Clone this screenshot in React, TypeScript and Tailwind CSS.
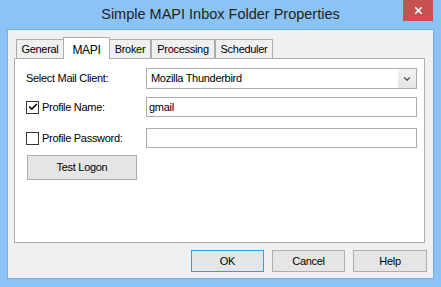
import { Check, ChevronDown, X } from "lucide-react";

const font = { fontFamily: '"Liberation Sans", Arial, sans-serif' };

function Tab({ label, active, w }: { label: string; active?: boolean; w: string }) {
  if (active) {
    return (
      <div className={`${w} relative z-10 -mx-[1px] -mb-px flex h-[22px] items-start justify-center border border-b-0 border-[#adadad] bg-white pt-[3px] text-[12px]`}>
        {label}
      </div>
    );
  }
  return (
    <div className={`${w} flex h-[19px] items-center justify-center border border-b-0 border-[#adadad] bg-[#f0f0f0] text-[11px]`}>
      {label}
    </div>
  );
}

function Checkbox({ checked }: { checked?: boolean }) {
  return (
    <div className="flex h-[13px] w-[13px] items-center justify-center border border-[#333] bg-white">
      {checked && <Check className="h-[10px] w-[10px] text-black" strokeWidth={4} />}
    </div>
  );
}

export default function App() {
  return (
    <div className="flex h-[287px] w-[441px] flex-col bg-[#8cc3f5] px-[7px] pb-[8px] text-black tracking-[-0.3px]" style={font}>
      {/* Title bar */}
      <div className="relative flex h-[29px] shrink-0 items-center justify-center">
        <span className="text-[14.5px] tracking-normal text-[#222]">Simple MAPI Inbox Folder Properties</span>
        <div className="absolute right-[1px] top-0 flex h-[21px] w-[30px] items-center justify-center bg-[#c75050]">
          <X className="h-[11px] w-[11px] text-white" strokeWidth={3.5} />
        </div>
      </div>

      {/* Client area */}
      <div className="flex flex-1 flex-col border border-[#74aee6] bg-[#f0f0f0] pl-[6px] pr-[8px] pt-[7px]">
        <div className="flex h-[21px] items-end pl-[2px] text-[11px]">
          <Tab label="General" w="w-[48px]" />
          <Tab label="MAPI" active w="w-[47px]" />
          <Tab label="Broker" w="w-[42px]" />
          <Tab label="Processing" w="w-[64px]" />
          <Tab label="Scheduler" w="w-[58px]" />
        </div>

        <div className="flex h-[185px] flex-col border border-[#adadad] bg-white pl-[11px] pr-[7px] pt-[9px] text-[11px]">
          <div className="flex h-[21px] items-center">
            <span className="w-[120px]">Select Mail Client:</span>
            <div className="flex h-[21px] flex-1 items-stretch border border-[#acacac] bg-white">
              <div className="flex flex-1 items-center px-[4px] bg-white">Mozilla Thunderbird</div>
              <div className="flex w-[18px] items-center justify-center bg-gradient-to-b from-[#f2f2f2] to-[#e5e5e5]">
                <ChevronDown className="h-[10px] w-[10px] text-[#555]" strokeWidth={3} />
              </div>
            </div>
          </div>

          <div className="mt-[8px] flex h-[20px] items-center">
            <div className="flex w-[120px] items-center gap-[3px]">
              <Checkbox checked />
              <span>Profile Name:</span>
            </div>
            <div className="flex h-[20px] flex-1 items-center border border-[#acacac] px-[2px]">gmail</div>
          </div>

          <div className="mt-[11px] flex h-[20px] items-center">
            <div className="flex w-[120px] items-center gap-[3px]">
              <Checkbox />
              <span>Profile Password:</span>
            </div>
            <div className="h-[20px] flex-1 border border-[#acacac]" />
          </div>

          <div className="ml-[1px] mt-[7px] flex h-[25px] w-[110px] items-center justify-center border border-[#adadad] bg-[#e5e5e5]">
            Test Logon
          </div>
        </div>

        <div className="mt-[7px] flex justify-end gap-[8px] text-[11px]">
          <div className="flex h-[22px] w-[73px] items-center justify-center border border-[#3399ff] bg-[#e5e5e5]">OK</div>
          <div className="flex h-[22px] w-[73px] items-center justify-center border border-[#adadad] bg-[#e5e5e5]">Cancel</div>
          <div className="-mr-[2px] flex h-[22px] w-[74px] items-center justify-center border border-[#adadad] bg-[#e5e5e5]">Help</div>
        </div>
      </div>
    </div>
  );
}
